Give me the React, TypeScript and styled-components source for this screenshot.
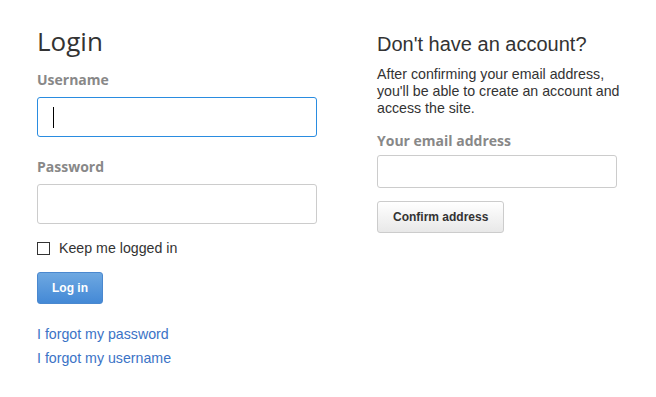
import styled, { createGlobalStyle } from 'styled-components';

const GlobalStyle = createGlobalStyle`
    body {
        margin: 0;
        background: #ffffff;
        font-family: "Liberation Sans", Arial, sans-serif;
        color: #333333;
    }
`
const Page = styled.div`
    display: flex;
    gap: 60px;
    padding: 24px 0 0 37px;
`
const Column = styled.div<{ $width: number }>`
    display: flex;
    flex-direction: column;
    width: ${p => p.$width}px;
`
const Title = styled.h1`
    font-family: "Open Sans", "Noto Sans", sans-serif;
    font-weight: 400;
    font-size: 26px;
    line-height: 34px;
    color: #333333;
    margin: 0 0 13px;
`
const SubTitle = styled.h2`
    font-family: "Liberation Sans", Arial, sans-serif;
    font-weight: 400;
    font-size: 20px;
    line-height: 26px;
    color: #333333;
    margin: 7px 0 9px;
`
const Intro = styled.p`
    font-size: 14.2px;
    line-height: 17px;
    margin: 0 0 15px;
    color: #333333;
`
const Label = styled.label<{ $gap: number }>`
    font-family: "Open Sans", "Noto Sans", sans-serif;
    font-weight: 700;
    font-size: 14px;
    line-height: 18px;
    color: #888888;
    margin-bottom: ${p => p.$gap}px;
`
const FieldWrap = styled.div<{ $gap: number; $width?: number }>`
    position: relative;
    width: ${p => (p.$width ? `${p.$width}px` : '100%')};
    margin-bottom: ${p => p.$gap}px;
`
const TextInput = styled.input<{ $height: number; $focused?: boolean }>`
    box-sizing: border-box;
    display: block;
    width: 100%;
    height: ${p => p.$height}px;
    border: 1px solid ${p => (p.$focused ? '#2a8ce0' : '#cccccc')};
    border-radius: 3px;
    background: #ffffff;
    padding: 0 10px;
    font-size: 15px;
    outline: none;
`
const Caret = styled.span`
    position: absolute;
    left: 16px;
    top: 10px;
    width: 1px;
    height: 21px;
    background: #000000;
`
const CheckRow = styled.label`
    display: flex;
    align-items: center;
    gap: 9px;
    font-size: 14.2px;
    line-height: 18px;
    color: #333333;
    margin-bottom: 15px;
`
const Box = styled.span`
    box-sizing: border-box;
    width: 13px;
    height: 13px;
    border: 1px solid #333333;
    background: #ffffff;
`
const Button = styled.button<{ $primary?: boolean }>`
    box-sizing: border-box;
    align-self: flex-start;
    height: 32px;
    padding: 0 ${p => (p.$primary ? '14px' : '15px')};
    font-family: "Liberation Sans", Arial, sans-serif;
    font-weight: 700;
    font-size: 12px;
    border-radius: 3px;
    cursor: pointer;
    color: ${p => (p.$primary ? '#ffffff' : '#333333')};
    border: 1px solid ${p => (p.$primary ? '#4a88cf' : '#cccccc')};
    background: ${p => (p.$primary
        ? 'linear-gradient(#6ea8e1, #4489d6)'
        : 'linear-gradient(#ffffff, #e8e8e8)')};
`
const Links = styled.div`
    display: flex;
    flex-direction: column;
    gap: 6px;
    margin-top: 21px;
`
const TextLink = styled.a`
    font-size: 14.2px;
    line-height: 18px;
    color: #3b73c6;
    text-decoration: none;
`

function App() {
    return (
        <>
            <GlobalStyle />
            <Page>
                <Column $width={280}>
                    <Title>Login</Title>
                    <Label htmlFor='username' $gap={8}>Username</Label>
                    <FieldWrap $gap={21}>
                        <TextInput id='username' type='text' $height={40} $focused />
                        <Caret />
                    </FieldWrap>
                    <Label htmlFor='password' $gap={8}>Password</Label>
                    <FieldWrap $gap={15}>
                        <TextInput id='password' type='password' $height={40} />
                    </FieldWrap>
                    <CheckRow>
                        <Box />
                        Keep me logged in
                    </CheckRow>
                    <Button $primary>Log in</Button>
                    <Links>
                        <TextLink href='#'>I forgot my password</TextLink>
                        <TextLink href='#'>I forgot my username</TextLink>
                    </Links>
                </Column>
                <Column $width={250}>
                    <SubTitle>Don't have an account?</SubTitle>
                    <Intro>
                        After confirming your email address, you'll be able to create an account and access the site.
                    </Intro>
                    <Label htmlFor='email' $gap={5}>Your email address</Label>
                    <FieldWrap $gap={13} $width={240}>
                        <TextInput id='email' type='email' $height={33} />
                    </FieldWrap>
                    <Button>Confirm address</Button>
                </Column>
            </Page>
        </>
    )
}

export default App;
